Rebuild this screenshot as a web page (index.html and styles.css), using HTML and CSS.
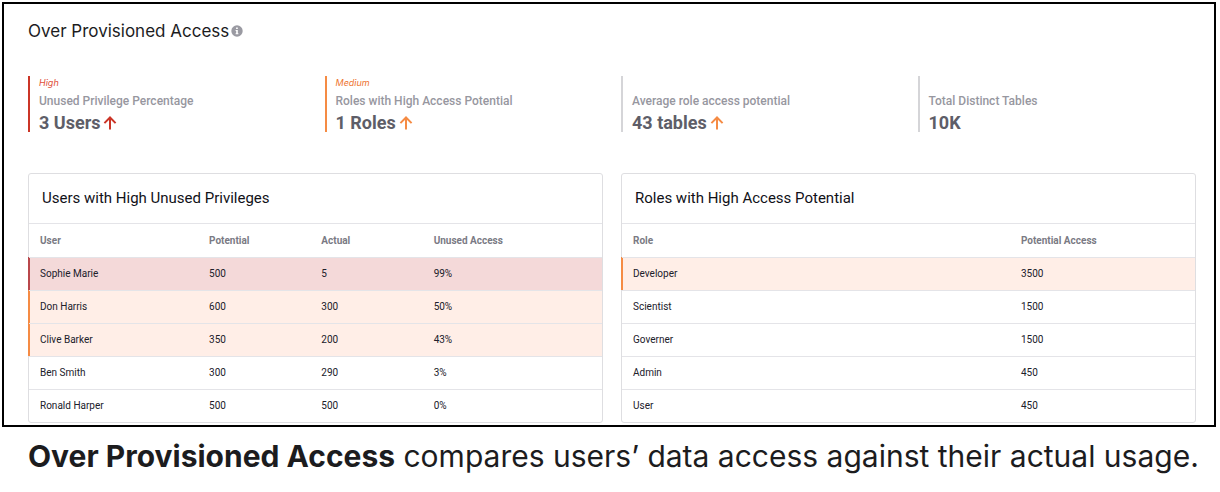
FILE: index.html
```
<!DOCTYPE html>
<html lang="en">
<head>
  <meta charset="UTF-8">
  <title>Over Provisioned Access</title>
  <meta name="viewport" content="width=device-width, initial-scale=1">
  <link rel="stylesheet" href="styles.css">
</head>
<body>
  <main class="dashboard">
    <div class="page-title">
      <h1>Over Provisioned Access</h1>
      <svg class="info-icon" viewBox="0 0 12 12" role="img" aria-label="Info">
        <circle cx="6" cy="6" r="5.7" fill="#9a9aa2"/>
        <path d="M5.1 2.4h1.7v1.5H5.1zM4.6 4.9h2.2v3.3h.6v1H4.6v-1h.6V5.9h-.6z" fill="#fff"/>
      </svg>
    </div>

    <section class="stats">
      <div class="stat high">
        <em>High</em>
        <h3>Unused Privilege Percentage</h3>
        <p>3 Users
          <svg class="arrow" viewBox="0 0 14 14" aria-hidden="true"><path d="M7 13.6V1.6M1.4 7.1L7 1.5l5.6 5.6"/></svg>
        </p>
      </div>
      <div class="stat medium">
        <em>Medium</em>
        <h3>Roles with High Access Potential</h3>
        <p>1 Roles
          <svg class="arrow" viewBox="0 0 14 14" aria-hidden="true"><path d="M7 13.6V1.6M1.4 7.1L7 1.5l5.6 5.6"/></svg>
        </p>
      </div>
      <div class="stat">
        <h3>Average role access potential</h3>
        <p>43 tables
          <svg class="arrow" viewBox="0 0 14 14" aria-hidden="true"><path d="M7 13.6V1.6M1.4 7.1L7 1.5l5.6 5.6"/></svg>
        </p>
      </div>
      <div class="stat">
        <h3>Total Distinct Tables</h3>
        <p>10K</p>
      </div>
    </section>

    <section class="cards">
      <div class="card">
        <h2>Users with High Unused Privileges</h2>
        <table class="users">
          <thead>
            <tr><th>User</th><th>Potential</th><th>Actual</th><th>Unused Access</th></tr>
          </thead>
          <tbody>
            <tr class="row-high"><td>Sophie Marie</td><td>500</td><td>5</td><td>99%</td></tr>
            <tr class="row-medium"><td>Don Harris</td><td>600</td><td>300</td><td>50%</td></tr>
            <tr class="row-medium"><td>Clive Barker</td><td>350</td><td>200</td><td>43%</td></tr>
            <tr><td>Ben Smith</td><td>300</td><td>290</td><td>3%</td></tr>
            <tr><td>Ronald Harper</td><td>500</td><td>500</td><td>0%</td></tr>
          </tbody>
        </table>
      </div>
      <div class="card">
        <h2>Roles with High Access Potential</h2>
        <table class="roles">
          <thead>
            <tr><th>Role</th><th>Potential Access</th></tr>
          </thead>
          <tbody>
            <tr class="row-medium"><td>Developer</td><td>3500</td></tr>
            <tr><td>Scientist</td><td>1500</td></tr>
            <tr><td>Governer</td><td>1500</td></tr>
            <tr><td>Admin</td><td>450</td></tr>
            <tr><td>User</td><td>450</td></tr>
          </tbody>
        </table>
      </div>
    </section>
  </main>

  <p class="caption"><strong>Over Provisioned Access</strong> compares users’ data access against their actual usage.</p>
</body>
</html>
```
FILE: styles.css
```
* {
  box-sizing: border-box;
}

body {
  margin: 0;
  padding: 2px 4px 0 2px;
  background: #fff;
  color: #1c1c1e;
  font-family: Roboto, sans-serif;
}

h1, h2, h3, p {
  margin: 0;
  font-weight: 400;
}

.dashboard {
  border: 2px solid #000;
  padding: 16px 18px 2px 24px;
}

.page-title {
  display: flex;
  align-items: center;
  gap: 2px;
}

h1 {
  font-family: Inter, sans-serif;
  font-size: 17px;
  line-height: 22px;
}

.info-icon {
  width: 12px;
  height: 12px;
}

.stats {
  display: grid;
  grid-template-columns: repeat(4, 1fr);
  gap: 18px;
  margin-top: 34px;
}

.stat {
  display: flex;
  flex-direction: column;
  justify-content: flex-end;
  height: 56px;
  padding-left: 9px;
  border-left: 2px solid #d5d5d8;
}

.stat em {
  font-family: Inter, sans-serif;
  font-size: 9px;
  font-weight: 400;
  line-height: 10px;
  color: #e04e39;
}

.stat h3 {
  font-size: 12px;
  font-weight: 500;
  line-height: 26px;
  color: #97979f;
}

.stat p {
  display: flex;
  align-items: center;
  gap: 3px;
  font-size: 18px;
  font-weight: 700;
  line-height: 18px;
  color: #5e5e68;
}

.arrow {
  width: 14px;
  height: 14px;
  fill: none;
  stroke: #f58b44;
  stroke-width: 2;
}

.high {
  border-color: #cb3527;
}

.high .arrow {
  stroke: #cb3527;
}

.medium {
  border-color: #f58b44;
}

.medium em {
  color: #ee7430;
}

.cards {
  display: grid;
  grid-template-columns: 1fr 1fr;
  gap: 18px;
  margin-top: 41px;
}

.card {
  border: 1px solid #dedee1;
  border-radius: 3px;
}

.card h2 {
  padding: 0 13px;
  font-size: 15px;
  line-height: 49px;
  color: #111118;
}

table {
  width: 100%;
  table-layout: fixed;
  border-collapse: separate;
  border-spacing: 0;
}

th, td {
  height: 33px;
  padding: 0 11px;
  border-top: 1px solid #e4e4e8;
  font-size: 10px;
  line-height: 16px;
  text-align: left;
  color: #20202a;
}

th {
  height: 34px;
  font-weight: 700;
  color: #7a7a84;
}

.users th:first-child {
  width: 29.5%;
}

.users th:nth-child(2),
.users th:nth-child(3) {
  width: 19.6%;
}

.roles th:first-child {
  width: 67.7%;
}

.row-high {
  background: #f4d9d9;
}

.row-medium {
  background: #ffeee7;
}

.row-high td:first-child {
  box-shadow: inset 1px 0 #b9474b, -1px 0 #b9474b;
}

.row-medium td:first-child {
  box-shadow: inset 1px 0 #f58b44, -1px 0 #f58b44;
}

.caption {
  padding: 7px 16px 0 26px;
  font-family: Inter, sans-serif;
  font-size: 30px;
  line-height: 44px;
}
```
